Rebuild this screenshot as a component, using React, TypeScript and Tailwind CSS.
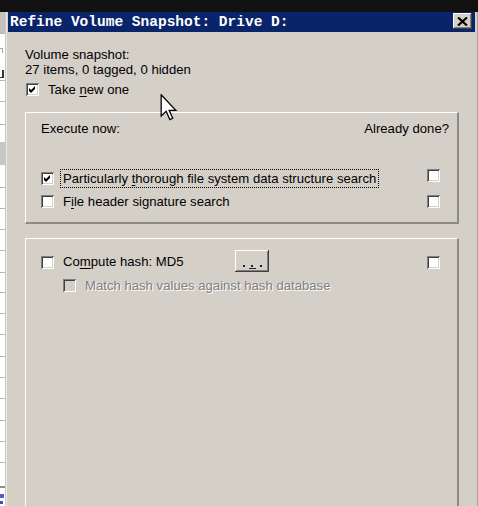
const sunken =
  "shadow-[inset_1px_1px_0_#808080,inset_-1px_-1px_0_#ffffff,inset_2px_2px_0_#404040,inset_-2px_-2px_0_#d4d0c8]";
const raised =
  "shadow-[inset_-1px_-1px_0_#404040,inset_1px_1px_0_#ffffff,inset_-2px_-2px_0_#808080,inset_2px_2px_0_#d4d0c8]";

function CheckBox({
  checked = false,
  disabled = false,
  className = "",
}: {
  checked?: boolean;
  disabled?: boolean;
  className?: string;
}) {
  return (
    <div
      className={`relative w-[13px] h-[13px] shrink-0 ${sunken} ${disabled ? "bg-[#d4d0c8]" : "bg-white"} ${className}`}
    >
      {checked && (
        <svg width="13" height="13" viewBox="0 0 13 13" className="absolute inset-0">
          <polygon points="3,5 5,7 9,3 9,6 5,10 3,8" fill="#000" />
        </svg>
      )}
    </div>
  );
}

const stripLines = [33, 80, 101, 124, 187, 208, 229, 250, 272, 292, 313, 334, 356, 377, 398, 420, 441, 462];

export default function App() {
  return (
    <div
      className="relative w-[478px] h-[506px] overflow-hidden bg-[#111] flex flex-col text-black"
      style={{ fontFamily: '"Liberation Sans", Arial, sans-serif' }}
    >
      <div className="h-[12px] shrink-0" />
      <div className="flex flex-1 min-h-0">
        {/* window behind the dialog */}
        <div className="relative w-[6px] bg-white border-r border-[#c8c8c8]">
          <div className="h-[21px] bg-[#c4c2bc]" />
          <div className="absolute left-0 top-[130px] w-[5px] h-[23px] bg-[#c9c7c1]" />
          <div className="absolute left-0 top-[36px] w-[3px] h-[5px] border-t border-r border-[#aaa]" />
          <div className="absolute left-0 top-[58px] w-[4px] h-[8px] border-r-2 border-b border-[#333]" />
          {stripLines.map((y) => (
            <div key={y} className="absolute left-0 w-[5px] h-px bg-[#b8b8b8]" style={{ top: y - 12 }} />
          ))}
          <div className="absolute left-0 top-[474px] w-[5px] h-[2px] bg-[#909090]" />
          <div className="absolute left-0 top-[482px] w-[4px] h-[4px] bg-[#4a5fd8]" />
          <div className="absolute left-0 top-[489px] w-[3px] h-[3px] bg-[#3a4fc8]" />
        </div>

        {/* dialog */}
        <div className="flex-1 flex flex-col bg-[#d4d0c8] border-l border-[#ecebe6] border-r border-r-[#a5a39d] pl-px pr-[2px]">
          <div className="h-[20px] shrink-0 bg-[#0a246a] flex items-start justify-between">
            <div
              className="pl-[2px] pt-[1px] text-white font-bold text-[14.5px] leading-[18px] whitespace-pre"
              style={{ fontFamily: '"Liberation Mono", "Courier New", monospace' }}
            >
              Refine Volume Snapshot: Drive D:
            </div>
            <div className={`mt-px mr-[3px] w-[19px] h-[16px] bg-[#d4d0c8] ${raised} flex items-center justify-center`}>
              <svg width="11" height="9" viewBox="0 0 11 9">
                <path d="M1 0.5 L10 8.5 M10 0.5 L1 8.5" stroke="#000" strokeWidth="2.2" />
              </svg>
            </div>
          </div>

          <div className="flex-1 flex flex-col pl-[17px] pr-[16px] text-[13.15px]">
            <div className="mt-[15px] leading-[15px]">
              <div>Volume snapshot:</div>
              <div>27 items, 0 tagged, 0 hidden</div>
            </div>
            <div className="mt-[6px] h-[13px] flex items-center pl-px">
              <CheckBox checked />
              <span className="ml-[9px] leading-[13px]">
                Take <span className="underline underline-offset-2">n</span>ew one
              </span>
            </div>

            {/* execute now group */}
            <div className="mt-[16px] h-[112px] shrink-0 flex flex-col border-t border-l border-white border-r-2 border-b-2 border-r-[#8c8a85] border-b-[#8c8a85] pl-[15px] pr-[8px]">
              <div className="mt-[8px] leading-[15px] flex justify-between">
                <span>Execute now:</span>
                <span>Already done?</span>
              </div>
              <div className="mt-[33px] h-[19px] flex items-center">
                <CheckBox checked />
                <span className="ml-[6px] h-[19px] px-[2px] border border-dotted border-black leading-[17px] whitespace-nowrap">
                  Particularly <span className="underline underline-offset-2">t</span>horough file system data structure search
                </span>
                <CheckBox className="ml-auto mr-[9px] self-start" />
              </div>
              <div className="mt-[7px] h-[13px] flex items-center">
                <CheckBox />
                <span className="ml-[9px] leading-[13px]">
                  F<span className="underline underline-offset-2">i</span>le header signature search
                </span>
                <CheckBox className="ml-auto mr-[9px]" />
              </div>
            </div>

            {/* hash group */}
            <div className="mt-[14px] flex-1 flex flex-col border-t border-l border-white border-r-2 border-r-[#8c8a85] pl-[15px] pr-[8px]">
              <div className="mt-[11px] h-[22px] flex items-start">
                <CheckBox className="mt-[6px]" />
                <span className="ml-[9px] mt-[4px] w-[172px] leading-[15px]">
                  Co<span className="underline underline-offset-2">m</span>pute hash: MD5
                </span>
                <div className={`w-[34px] h-[22px] bg-[#d4d0c8] ${raised} flex items-end justify-center pb-[5px]`}>
                  <div className="flex items-end gap-[4px]">
                    <div className="w-[2px] h-[2px] bg-[#222]" />
                    <div className="flex flex-col items-center">
                      <div className="w-[2px] h-[2px] bg-[#222]" />
                      <div className="mt-[1px] w-[7px] h-px bg-[#222] -mb-[2px]" />
                    </div>
                    <div className="w-[2px] h-[2px] bg-[#222]" />
                  </div>
                </div>
                <CheckBox className="ml-auto mr-[9px] mt-[6px]" />
              </div>
              <div className="mt-[7px] ml-[22px] h-[13px] flex items-center">
                <CheckBox disabled />
                <span className="ml-[9px] leading-[13px] text-[#808080] [text-shadow:1px_1px_0_#ffffff]">
                  Match hash values against hash database
                </span>
              </div>
            </div>
          </div>
        </div>
      </div>

      {/* mouse pointer */}
      <svg width="18" height="27" viewBox="0 0 12 19" className="absolute left-[160px] top-[94px]">
        <path
          d="M0.5 0.5 L0.5 15.5 L4 12.2 L6.6 18 L8.6 17.1 L6.1 11.5 L10.8 11.5 Z"
          fill="#fff"
          stroke="#000"
          strokeWidth="0.9"
          strokeLinejoin="miter"
        />
      </svg>
    </div>
  );
}
